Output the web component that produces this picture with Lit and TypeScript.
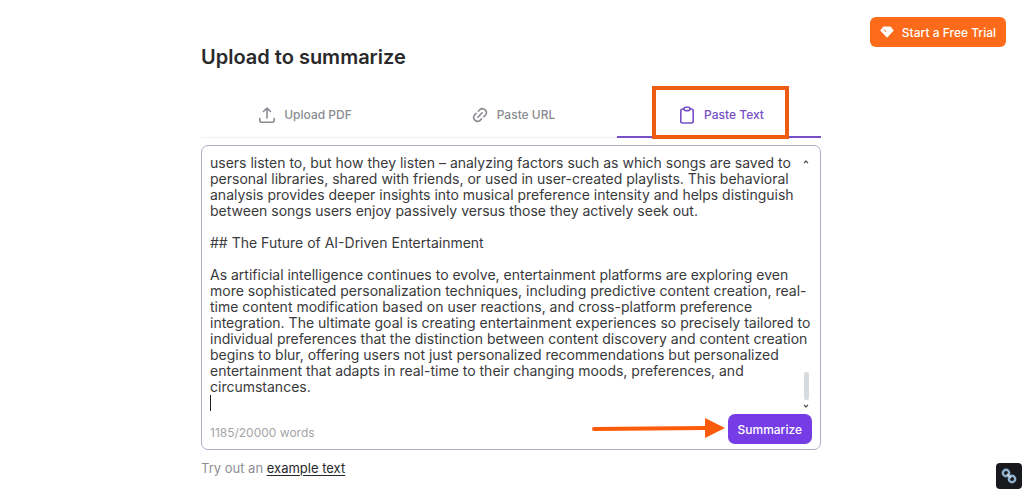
import { LitElement, html, css, svg } from "lit";
import { customElement, state } from "lit/decorators.js";
import { classMap } from "lit/directives/class-map.js";

const DRAFT = `users listen to, but how they listen – analyzing factors such as which songs are saved to personal libraries, shared with friends, or used in user-created playlists. This behavioral analysis provides deeper insights into musical preference intensity and helps distinguish between songs users enjoy passively versus those they actively seek out.

## The Future of AI-Driven Entertainment

As artificial intelligence continues to evolve, entertainment platforms are exploring even more sophisticated personalization techniques, including predictive content creation, real-time content modification based on user reactions, and cross-platform preference integration. The ultimate goal is creating entertainment experiences so precisely tailored to individual preferences that the distinction between content discovery and content creation begins to blur, offering users not just personalized recommendations but personalized entertainment that adapts in real-time to their changing moods, preferences, and circumstances.
`;

const uploadIcon = svg`<path d="M9 12V2.500M5.500 5.500 9 2l3.500 3.500M1.800 12.500v2A1.700 1.700 0 0 0 3.500 16.200h11a1.700 1.700 0 0 0 1.700-1.700v-2"/>`;
const linkIcon = svg`<path d="M6.800 11.200l4.400-4.400M7.400 5.200l1.400-1.500a3.900 3.900 0 0 1 5.500 5.500L12.900 10.600M10.600 12.800l-1.400 1.500a3.900 3.900 0 0 1-5.500-5.500L5.100 7.400"/>`;
const clipboardIcon = svg`<path d="M6 3H4.500A1.700 1.700 0 0 0 2.800 4.700v10.600A1.700 1.700 0 0 0 4.500 17h9a1.700 1.700 0 0 0 1.700-1.700V4.700A1.700 1.700 0 0 0 13.500 3H12"/><rect x="6" y="1.200" width="6" height="3.400" rx="1.500"/>`;

const TABS = [
  { label: "Upload PDF", icon: uploadIcon },
  { label: "Paste URL", icon: linkIcon },
  { label: "Paste Text", icon: clipboardIcon },
];

@customElement("app-root")
export class AppRoot extends LitElement {
  @state() private active = 2;

  static styles = css`
    :host {
      display: block;
      position: relative;
      min-height: 100vh;
      background: #fff;
      color: #3a3a3c;
      font-family: Inter, "Liberation Sans", sans-serif;
      overflow: hidden;
    }
    * { box-sizing: border-box; }
    button { border: 0; font: inherit; cursor: pointer; }
    .top {
      display: flex;
      justify-content: flex-end;
      padding: 17px 18px 0;
    }
    .trial {
      display: flex;
      align-items: center;
      gap: 8px;
      height: 30px;
      padding: 0 10px;
      border-radius: 6px;
      background: #fd6a19;
      color: #fff;
      font-size: 12px;
      font-weight: 500;
    }
    main {
      max-width: 622px;
      margin: 0 auto;
      padding-right: 2px;
    }
    h1 {
      margin: 0 0 25px;
      font-size: 20px;
      line-height: 20px;
      font-weight: 600;
      color: #29292b;
    }
    .tabs {
      display: grid;
      grid-template-columns: repeat(3, 1fr);
      column-gap: 4px;
      border-bottom: 1px solid #f1f1f4;
    }
    .tab {
      position: relative;
      display: flex;
      align-items: center;
      justify-content: center;
      gap: 8px;
      height: 45px;
      padding: 0 0 0 4px;
      background: none;
      color: #888b91;
      font-size: 12px;
      font-weight: 500;
    }
    .tab.active {
      color: #7750c8;
      box-shadow: 0 1px #7750c8, inset 0 -1px #7750c8;
    }
    .tab svg {
      fill: none;
      stroke: currentColor;
      stroke-width: 1.6;
      stroke-linecap: round;
      stroke-linejoin: round;
    }
    .callout {
      position: absolute;
      inset: -6px 32px -2px 35px;
      border: 4px solid #ee5c12;
      pointer-events: none;
    }
    .card {
      position: relative;
      margin-top: 7px;
      padding: 9px 8px 5px;
      border: 1px solid #b9a8cd;
      border-radius: 7px;
    }
    .editor {
      position: relative;
      display: flex;
    }
    textarea {
      flex: 1;
      height: 256px;
      padding: 0;
      border: 0;
      outline: 0;
      resize: none;
      overflow: auto;
      scrollbar-width: none;
      background: none;
      color: #3a3a3c;
      font: inherit;
      font-size: 14px;
      line-height: 16px;
    }
    .caret {
      position: absolute;
      left: 0;
      bottom: 0;
      width: 1px;
      height: 16px;
      background: #222;
    }
    .scroll {
      position: absolute;
      inset: 0 0 0 auto;
      display: flex;
      flex-direction: column;
      align-items: center;
      width: 12px;
      padding: 5px 0 3px;
      color: #505054;
    }
    .scroll svg { fill: none; stroke: currentColor; stroke-width: 1.200; }
    .thumb {
      width: 5px;
      height: 28px;
      margin: auto 0 4px;
      border-radius: 2px;
      background: #d6dbe0;
    }
    .foot {
      display: flex;
      align-items: center;
      justify-content: space-between;
      margin-top: 3px;
    }
    .count { padding-top: 8px; font-size: 12px; line-height: 16px; color: #a3a5a9; }
    .go {
      height: 30px;
      padding: 0 10px;
      border-radius: 7px;
      background: #763de6;
      color: #fff;
      font-size: 12px;
      font-weight: 500;
    }
    .arrow { position: absolute; right: 95px; bottom: 11px; }
    .try {
      margin: 10px 0 0;
      font-size: 13px;
      line-height: 16px;
      color: #8e9095;
    }
    .try a { color: #29292b; text-underline-offset: 2px; }
    .ext {
      position: absolute;
      right: 2px;
      bottom: 1px;
      width: 26px;
      height: 26px;
      padding: 0;
      border-radius: 4px;
      background: #17191c;
    }
    .ext svg { display: block; }
  `;

  render() {
    return html`
      <header class="top">
        <button class="trial">
          <svg width="14" height="14" viewBox="0 0 14 14" aria-hidden="true">
            <path d="M3.500 2h7L13.300 5.500 7 12.300.7 5.500z" fill="#fff" stroke="#fff" stroke-linejoin="round"/>
            <path d="M4.300 4.800 5.800 6.600" stroke="#fd6a19" stroke-linecap="round"/>
          </svg>
          Start a Free Trial
        </button>
      </header>
      <main>
        <h1>Upload to summarize</h1>
        <div class="tabs" role="tablist">
          ${TABS.map((tab, i) => html`
            <button
              role="tab"
              aria-selected=${i === this.active ? "true" : "false"}
              class=${classMap({ tab: true, active: i === this.active })}
              @click=${() => { this.active = i; }}
            >
              <svg width="18" height="18" viewBox="0 0 18 18" aria-hidden="true">${tab.icon}</svg>
              ${tab.label}
              ${i === 2 ? html`<span class="callout"></span>` : ""}
            </button>`)}
        </div>
        <section class="card">
          <div class="editor">
            <textarea aria-label="Text to summarize" spellcheck="false" .value=${DRAFT}></textarea>
            <span class="caret"></span>
            <div class="scroll" aria-hidden="true">
              <svg width="6" height="4" viewBox="0 0 6 4"><path d="M1 3.200 3 1l2 2.200"/></svg>
              <span class="thumb"></span>
              <svg width="6" height="4" viewBox="0 0 6 4"><path d="M1 .8 3 3 5 .8"/></svg>
            </div>
          </div>
          <div class="foot">
            <span class="count">1185/20000 words</span>
            <button class="go">Summarize</button>
          </div>
          <svg class="arrow" width="133" height="20" viewBox="0 0 133 20" aria-hidden="true">
            <path d="M2 11 114 10" stroke="#fb5c0b" stroke-width="4" stroke-linecap="round"/>
            <path d="M113 0v20l20-10z" fill="#fb5c0b"/>
          </svg>
        </section>
        <p class="try">Try out an <a href="#example">example text</a></p>
      </main>
      <button class="ext" aria-label="Copy link">
        <svg width="26" height="26" viewBox="0 0 26 26" fill="none" stroke="#8fb0cf" stroke-width="2.400">
          <circle cx="10" cy="10" r="3.200"/>
          <circle cx="16" cy="16" r="3.200"/>
          <path d="M11 11l4 4" stroke="#d3e0ec" stroke-width="1.500"/>
        </svg>
      </button>
    `;
  }
}
